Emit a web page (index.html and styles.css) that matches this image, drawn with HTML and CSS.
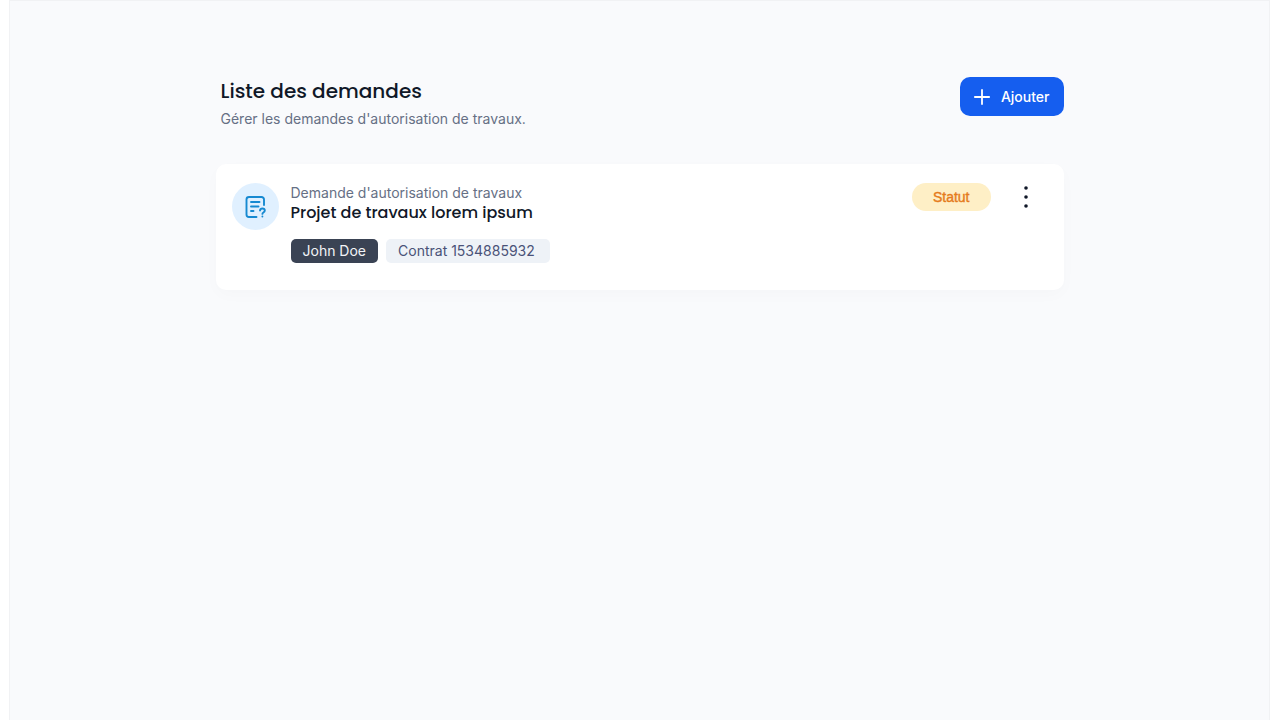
FILE: index.html
```html
<!DOCTYPE html>
<html lang="fr">
<head>
<meta charset="utf-8">
<meta name="viewport" content="width=device-width, initial-scale=1">
<title>Liste des demandes</title>
<link rel="stylesheet" href="styles.css">
</head>
<body>
<main class="page">
  <div class="content">
    <header class="header">
      <div class="heading">
        <h1 class="title">Liste des demandes</h1>
        <p class="subtitle">Gérer les demandes d'autorisation de travaux.</p>
      </div>
      <button class="add" type="button">
        <svg class="add-icon" viewBox="0 0 16 16" aria-hidden="true"><path d="M8 .2v15.600M.2 8h15.600" stroke="currentColor" stroke-width="1.8" fill="none"/></svg>
        Ajouter
      </button>
    </header>
    <article class="card">
      <div class="avatar">
        <svg class="avatar-icon" viewBox="0 0 24 24" aria-hidden="true" fill="none" stroke="currentColor" stroke-width="1.9" stroke-linecap="round" stroke-linejoin="round">
          <path d="M13.500 22H6a2.500 2.500 0 0 1-2.500-2.500v-15A2.500 2.500 0 0 1 6 2h12.500A2.500 2.500 0 0 1 21 4.500V10"/>
          <path d="M8 7h8.500M8 11.500h7.500M8 16h2.500"/>
          <path d="M17 15.500c.2-1.200 1.100-2 2.400-2s2.400.8 2.400 2.100c0 1.900-2.400 2-2.400 3.300M19.400 21.500v.1"/>
        </svg>
      </div>
      <div class="details">
        <p class="kind">Demande d'autorisation de travaux</p>
        <h2 class="project">Projet de travaux lorem ipsum</h2>
        <div class="tags">
          <span class="tag tag-dark">John Doe</span>
          <span class="tag tag-light">Contrat 1534885932</span>
        </div>
      </div>
      <div class="actions">
        <span class="status">Statut</span>
        <button class="menu" type="button" aria-label="Options">
          <svg class="menu-icon" viewBox="0 0 4 22" aria-hidden="true" fill="currentColor"><circle cx="2" cy="2" r="1.800"/><circle cx="2" cy="11" r="1.800"/><circle cx="2" cy="20" r="1.800"/></svg>
        </button>
      </div>
    </article>
  </div>
</main>
</body>
</html>
```
FILE: styles.css
```css
* { box-sizing: border-box; }
body {
  margin: 0;
  background: #fff;
  color: #101828;
  font-family: Inter, "Liberation Sans", sans-serif;
  font-size: 14px;
  line-height: 20px;
}
h1, h2, p { margin: 0; }
button { font: inherit; border: 0; cursor: pointer; }
.page {
  min-height: 100vh;
  margin: 0 10px 0 9px;
  padding: 76px 20px 40px;
  background: #f9fafc;
  border: 1px solid #f1f2f4;
  border-bottom: 0;
}
.content { max-width: 848px; margin: 0 auto; }
.header {
  display: flex;
  justify-content: space-between;
  align-items: flex-start;
  padding-left: 5px;
  margin-bottom: 35px;
}
.title {
  font-family: Poppins, Inter, sans-serif;
  font-size: 20px;
  line-height: 28px;
  font-weight: 500;
}
.subtitle { margin-top: 4px; color: #667085; }
.add {
  display: flex;
  align-items: center;
  gap: 11px;
  min-height: 39px;
  padding: 9px 14px;
  border-radius: 10px;
  background: #155eef;
  color: #fff;
  font-weight: 500;
}
.add-icon { width: 16px; height: 16px; }
.card {
  display: flex;
  align-items: flex-start;
  gap: 12px;
  padding: 19px 27px 27px 16px;
  border-radius: 10px;
  background: #fff;
  box-shadow: 0 5px 16px rgba(16, 24, 40, 0.02);
}
.avatar {
  display: grid;
  place-items: center;
  flex: none;
  width: 47px;
  height: 47px;
  border-radius: 50%;
  background: #e0f0ff;
  color: #1689d1;
}
.avatar-icon { width: 24px; height: 24px; }
.details { flex: 1; }
.kind { color: #667085; }
.project {
  font-family: Poppins, Inter, sans-serif;
  font-size: 16px;
  line-height: 20px;
  font-weight: 500;
}
.tags { display: flex; flex-wrap: wrap; gap: 8px; margin-top: 16px; }
.tag { padding: 2px 12px; border-radius: 5px; }
.tag-dark { background: #3a4354; color: #f2f4f7; }
.tag-light { padding-right: 15px; background: #eef2f7; color: #4a5278; }
.actions { display: flex; align-items: center; gap: 24px; }
.status {
  padding: 4px 21px;
  border-radius: 14px;
  background: #feefc6;
  color: #e57b1c;
  font-family: "Liberation Sans", Arial, sans-serif;
  -webkit-text-stroke: 0.4px #e57b1c;
}
.menu {
  display: grid;
  place-items: center;
  width: 22px;
  height: 28px;
  padding: 0;
  background: transparent;
  color: #101828;
}
.menu-icon { width: 4px; height: 22px; }
```
